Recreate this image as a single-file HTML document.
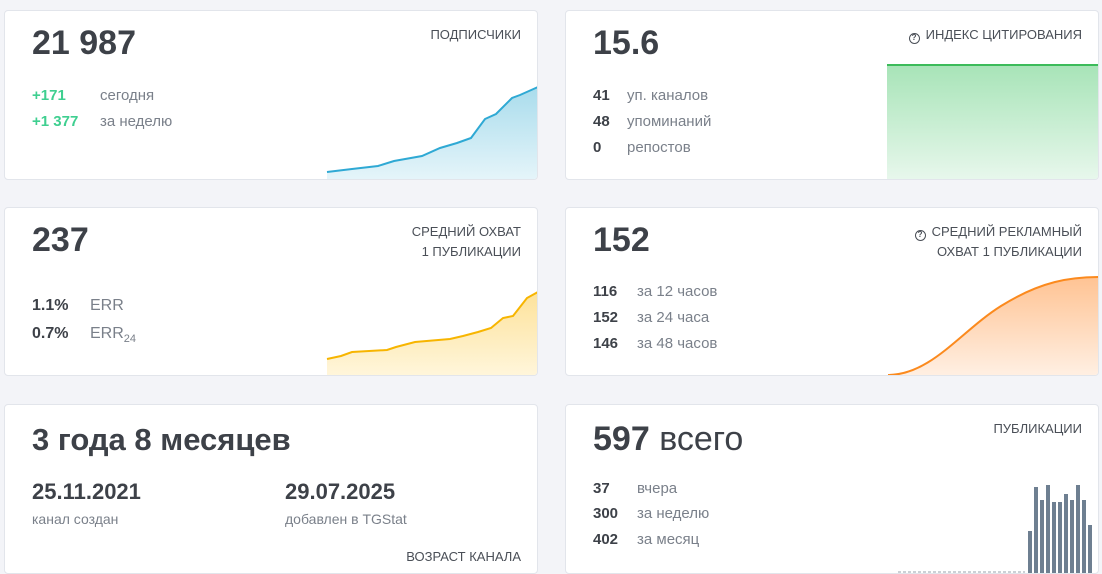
<!DOCTYPE html>
<html><head><meta charset="utf-8"><style>
*{margin:0;padding:0;box-sizing:border-box}
body{width:1102px;height:573px;background:#f3f4f8;font-family:"Liberation Sans",sans-serif;position:relative;overflow:hidden;color:#3d4148}
.c{position:absolute;background:#fff;border:1px solid #e2e5eb;border-radius:4px;overflow:hidden;width:534px}
.a{position:absolute;white-space:nowrap}
.big{font-size:34px;font-weight:bold;color:#3d4148}
.t{font-size:13px;color:#4a4f57;text-align:right;line-height:20px;right:16px}
.n{font-size:15px;font-weight:bold;color:#3d4148}
.l{font-size:15px;color:#7a808a}
.g{font-size:15px;font-weight:bold;color:#3fcf90}
svg{position:absolute}
</style></head><body>

<div class="c" style="left:4px;top:10px;height:170px">
<div class="a big" style="left:27px;top:13px">21 987</div>
<div class="a t" style="top:14px">ПОДПИСЧИКИ</div>
<div class="a g" style="left:27px;top:76px">+171</div><div class="a l" style="left:95px;top:76px">сегодня</div>
<div class="a g" style="left:27px;top:102px">+1 377</div><div class="a l" style="left:95px;top:102px">за неделю</div>
<svg style="left:0;top:0" width="534" height="170" viewBox="4 10 534 170">
<defs><linearGradient id="gb" x1="0" y1="0" x2="0" y2="1"><stop offset="0" stop-color="#a9dcec"/><stop offset="1" stop-color="#e6f5fa"/></linearGradient></defs>
<path d="M326,171 L351,168 377,165 393,160 421,155 439,147 456,142 470,137 484,118 495,113 511,97 519,94 537,86 L537,180 L326,180Z" fill="url(#gb)"/>
<path d="M326,171 L351,168 377,165 393,160 421,155 439,147 456,142 470,137 484,118 495,113 511,97 519,94 537,86" fill="none" stroke="#2fa9d4" stroke-width="2"/>
</svg>
</div>

<div class="c" style="left:565px;top:10px;height:170px">
<div class="a big" style="left:27px;top:13px">15.6</div>
<div class="a t" style="top:14px"><span style="display:inline-block;width:11px;height:11px;border:1.5px solid #4a4f57;border-radius:50%;font-size:8px;line-height:8px;text-align:center;font-weight:bold;vertical-align:-1px;margin-right:6px">?</span>ИНДЕКС ЦИТИРОВАНИЯ</div>
<div class="a n" style="left:27px;top:76px">41</div><div class="a l" style="left:61px;top:76px">уп. каналов</div>
<div class="a n" style="left:27px;top:102px">48</div><div class="a l" style="left:61px;top:102px">упоминаний</div>
<div class="a n" style="left:27px;top:128px">0</div><div class="a l" style="left:61px;top:128px">репостов</div>
<div class="a" style="left:321px;top:53px;width:213px;height:120px;background:linear-gradient(#a8e4b8,#eaf8ee);border-top:2px solid #3cbb5a"></div>
</div>

<div class="c" style="left:4px;top:207px;height:169px">
<div class="a big" style="left:27px;top:13px">237</div>
<div class="a t" style="top:14px">СРЕДНИЙ ОХВАТ<br>1 ПУБЛИКАЦИИ</div>
<div class="a n" style="left:27px;top:89px;font-size:16px">1.1%</div><div class="a l" style="left:85px;top:89px;font-size:16px">ERR</div>
<div class="a n" style="left:27px;top:117px;font-size:16px">0.7%</div><div class="a l" style="left:85px;top:117px;font-size:16px">ERR<sub style="font-size:11px">24</sub></div>
<svg style="left:0;top:0" width="534" height="169" viewBox="4 207 534 169">
<defs><linearGradient id="gy" x1="0" y1="0" x2="0" y2="1"><stop offset="0" stop-color="#fde29a"/><stop offset="1" stop-color="#fff6dc"/></linearGradient></defs>
<path d="M326,358 L340,355 351,351 386,349 395,346 414,341 449,338 462,335 477,331 490,327 502,317 512,315 526,297 537,291 L537,376 L326,376Z" fill="url(#gy)"/>
<path d="M326,358 L340,355 351,351 386,349 395,346 414,341 449,338 462,335 477,331 490,327 502,317 512,315 526,297 537,291" fill="none" stroke="#f7b500" stroke-width="2"/>
</svg>
</div>

<div class="c" style="left:565px;top:207px;height:169px">
<div class="a big" style="left:27px;top:13px">152</div>
<div class="a t" style="top:14px"><span style="display:inline-block;width:11px;height:11px;border:1.5px solid #4a4f57;border-radius:50%;font-size:8px;line-height:8px;text-align:center;font-weight:bold;vertical-align:-1px;margin-right:6px">?</span>СРЕДНИЙ РЕКЛАМНЫЙ<br>ОХВАТ 1 ПУБЛИКАЦИИ</div>
<div class="a n" style="left:27px;top:75px">116</div><div class="a l" style="left:71px;top:75px">за 12 часов</div>
<div class="a n" style="left:27px;top:101px">152</div><div class="a l" style="left:71px;top:101px">за 24 часа</div>
<div class="a n" style="left:27px;top:127px">146</div><div class="a l" style="left:71px;top:127px">за 48 часов</div>
<svg style="left:0;top:0" width="534" height="169" viewBox="565 207 534 169">
<defs><linearGradient id="go" x1="0" y1="0" x2="0" y2="1"><stop offset="0" stop-color="#ffc393"/><stop offset="1" stop-color="#fff0e4"/></linearGradient></defs>
<path d="M887,374 C930,374 960,330 1000,305 C1040,280 1070,276 1098,276 L1098,376 L887,376Z" fill="url(#go)"/>
<path d="M887,374 C930,374 960,330 1000,305 C1040,280 1070,276 1098,276" fill="none" stroke="#fb8a1e" stroke-width="2"/>
</svg>
</div>

<div class="c" style="left:4px;top:404px;height:170px">
<div class="a" style="left:27px;top:17px;font-size:31px;font-weight:bold">3 года 8 месяцев</div>
<div class="a" style="left:27px;top:74px;font-size:22px;font-weight:bold">25.11.2021</div>
<div class="a" style="left:280px;top:74px;font-size:22px;font-weight:bold">29.07.2025</div>
<div class="a l" style="left:27px;top:106px;font-size:14px">канал создан</div>
<div class="a l" style="left:280px;top:106px;font-size:14px">добавлен в TGStat</div>
<div class="a t" style="top:142px">ВОЗРАСТ КАНАЛА</div>
</div>

<div class="c" style="left:565px;top:404px;height:170px">
<div class="a big" style="left:27px;top:15px">597 <span style="font-weight:normal">всего</span></div>
<div class="a t" style="top:14px">ПУБЛИКАЦИИ</div>
<div class="a n" style="left:27px;top:75px">37</div><div class="a l" style="left:71px;top:75px">вчера</div>
<div class="a n" style="left:27px;top:100px">300</div><div class="a l" style="left:71px;top:100px">за неделю</div>
<div class="a n" style="left:27px;top:126px">402</div><div class="a l" style="left:71px;top:126px">за месяц</div>
<svg style="left:0;top:0" width="534" height="170" viewBox="565 404 534 170">
<line x1="897" y1="571" x2="1024" y2="571" stroke="#9aa3ad" stroke-width="1" stroke-dasharray="3,2"/>
<g fill="#6e7f91">
<rect x="1027" y="530" width="4" height="43"/><rect x="1033" y="486" width="4" height="87"/><rect x="1039" y="499" width="4" height="74"/><rect x="1045" y="484" width="4" height="89"/><rect x="1051" y="501" width="4" height="72"/><rect x="1057" y="501" width="4" height="72"/><rect x="1063" y="493" width="4" height="80"/><rect x="1069" y="499" width="4" height="74"/><rect x="1075" y="484" width="4" height="89"/><rect x="1081" y="499" width="4" height="74"/><rect x="1087" y="524" width="4" height="49"/>
</g>
</svg>
</div>

</body></html>
